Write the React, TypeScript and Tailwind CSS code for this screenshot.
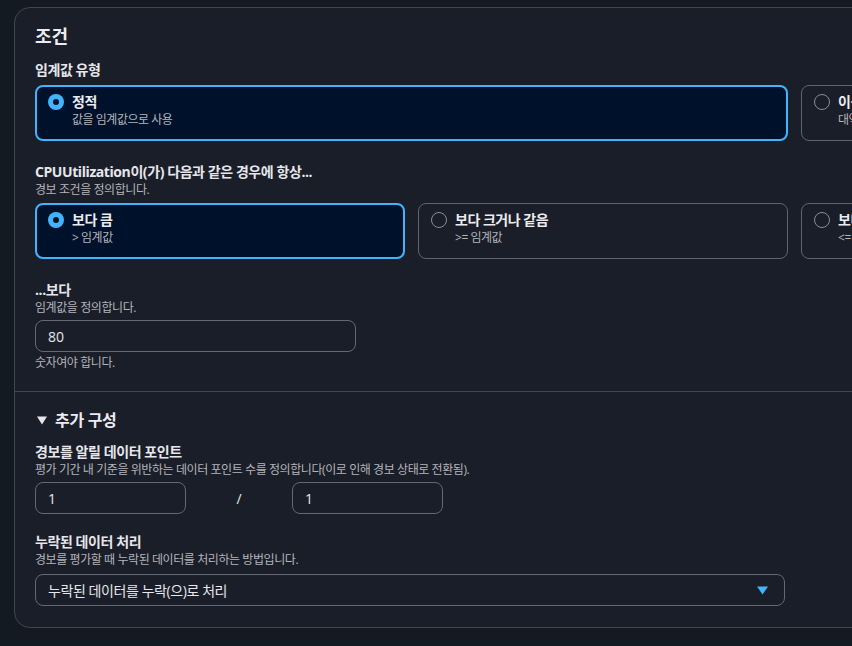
import React from 'react';

const font = { fontFamily: '"Open Sans", "Noto Sans CJK KR", sans-serif' };

type Tile = { title: string; desc: string; selected?: boolean; width: string };

const RadioTile: React.FC<Tile> = ({ title, desc, selected, width }) => (
  <div
    className={
      selected
        ? `${width} h-[56px] shrink-0 rounded-lg border-2 border-[#42b4ff] bg-[#00122b] pl-[11px] pt-[5px] flex gap-2`
        : `${width} h-[56px] shrink-0 rounded-lg border border-[#5f6370] bg-transparent pl-[12px] pt-[6px] flex gap-2`
    }
  >
    {selected ? (
      <div className="mt-[2px] w-4 h-4 rounded-full bg-[#42b4ff] flex items-center justify-center shrink-0">
        <div className="w-[6px] h-[6px] rounded-full bg-[#0b1220]" />
      </div>
    ) : (
      <div className="mt-[2px] w-4 h-4 rounded-full border-[1.5px] border-[#8c8c94] shrink-0" />
    )}
    <div className="flex flex-col tracking-[-0.03em]">
      <span className="text-[14px] leading-[20px] font-bold text-[#ebebf0] whitespace-nowrap">{title}</span>
      <span className="text-[12px] leading-[16px] text-[#b4b4bb] whitespace-nowrap">{desc}</span>
    </div>
  </div>
);

const Label: React.FC<{ children: React.ReactNode; className?: string }> = ({ children, className }) => (
  <div className={`text-[14px] leading-[18px] font-bold tracking-[-0.03em] text-[#e6e6eb] ${className ?? ''}`}>{children}</div>
);

const Desc: React.FC<{ children: React.ReactNode; className?: string }> = ({ children, className }) => (
  <div className={`text-[12px] leading-[16px] tracking-[-0.035em] text-[#b4b4bb] ${className ?? ''}`}>{children}</div>
);

const Input: React.FC<{ value: string; width: string }> = ({ value, width }) => (
  <div className={`${width} h-[32px] rounded-lg border border-[#656871] px-3 flex items-center text-[14px] text-[#e6e6eb]`}>
    {value}
  </div>
);

const App: React.FC = () => {
  return (
    <div className="w-[852px] h-[646px] overflow-hidden bg-[#141a22] pt-[7px] pl-[14px]" style={font}>
      <div className="w-[1200px] rounded-2xl border border-[#424650] bg-[#1a1e28]">
        {/* 조건 */}
        <div className="px-5 pt-4 pb-5">
          <h2 className="text-[18px] leading-[24px] font-bold text-[#ebebf0]">조건</h2>

          <Label className="mt-[12px] leading-[20px]">임계값 유형</Label>
          <div className="mt-[5px] flex gap-[13px]">
            <RadioTile selected title="정적" desc="값을 임계값으로 사용" width="w-[753px]" />
            <RadioTile title="이상 탐지" desc="대역을 임계값으로 사용" width="w-[370px]" />
          </div>

          <Label className="mt-[22px]">CPUUtilization이(가) 다음과 같은 경우에 항상...</Label>
          <Desc className="mt-[1px]">경보 조건을 정의합니다.</Desc>
          <div className="mt-[5px] flex gap-[13px]">
            <RadioTile selected title="보다 큼" desc="> 임계값" width="w-[370px]" />
            <RadioTile title="보다 크거나 같음" desc=">= 임계값" width="w-[370px]" />
            <RadioTile title="보다 작거나 같음" desc="<= 임계값" width="w-[370px]" />
          </div>

          <Label className="mt-[22px]">...보다</Label>
          <Desc className="mt-[1px]">임계값을 정의합니다.</Desc>
          <div className="mt-[4px]">
            <Input value="80" width="w-[321px]" />
          </div>
          <Desc className="mt-[3px]">숫자여야 합니다.</Desc>
        </div>

        {/* 추가 구성 */}
        <div className="border-t border-[#424650] px-5 pt-4 pb-[21px]">
          <div className="flex items-center gap-[8px] h-[24px]">
            <svg width="10" height="9" viewBox="0 0 10 9" className="ml-[2px]">
              <path d="M0 0.5 H10 L5 8.5 Z" fill="#e6e6eb" />
            </svg>
            <span className="text-[16px] leading-[24px] font-bold tracking-[-0.02em] text-[#ebebf0]">추가 구성</span>
          </div>

          <Label className="mt-[11px]">경보를 알릴 데이터 포인트</Label>
          <Desc className="mt-[1px]">평가 기간 내 기준을 위반하는 데이터 포인트 수를 정의합니다(이로 인해 경보 상태로 전환됨).</Desc>
          <div className="mt-[4px] flex items-center">
            <Input value="1" width="w-[151px]" />
            <div className="w-[106px] text-center text-[14px] text-[#e6e6eb]">/</div>
            <Input value="1" width="w-[151px]" />
          </div>

          <Label className="mt-[19px]">누락된 데이터 처리</Label>
          <Desc className="mt-[1px]">경보를 평가할 때 누락된 데이터를 처리하는 방법입니다.</Desc>
          <div className="mt-[6px] w-[750px] h-[32px] rounded-lg border border-[#656871] pl-3 pr-[16px] flex items-center justify-between">
            <span className="text-[14px] tracking-[-0.03em] text-[#e6e6eb]">누락된 데이터를 누락(으)로 처리</span>
            <svg width="11" height="9" viewBox="0 0 11 9">
              <path d="M0 0.5 H11 L5.5 8.5 Z" fill="#42b4ff" />
            </svg>
          </div>
        </div>
      </div>
    </div>
  );
};

export default App;
